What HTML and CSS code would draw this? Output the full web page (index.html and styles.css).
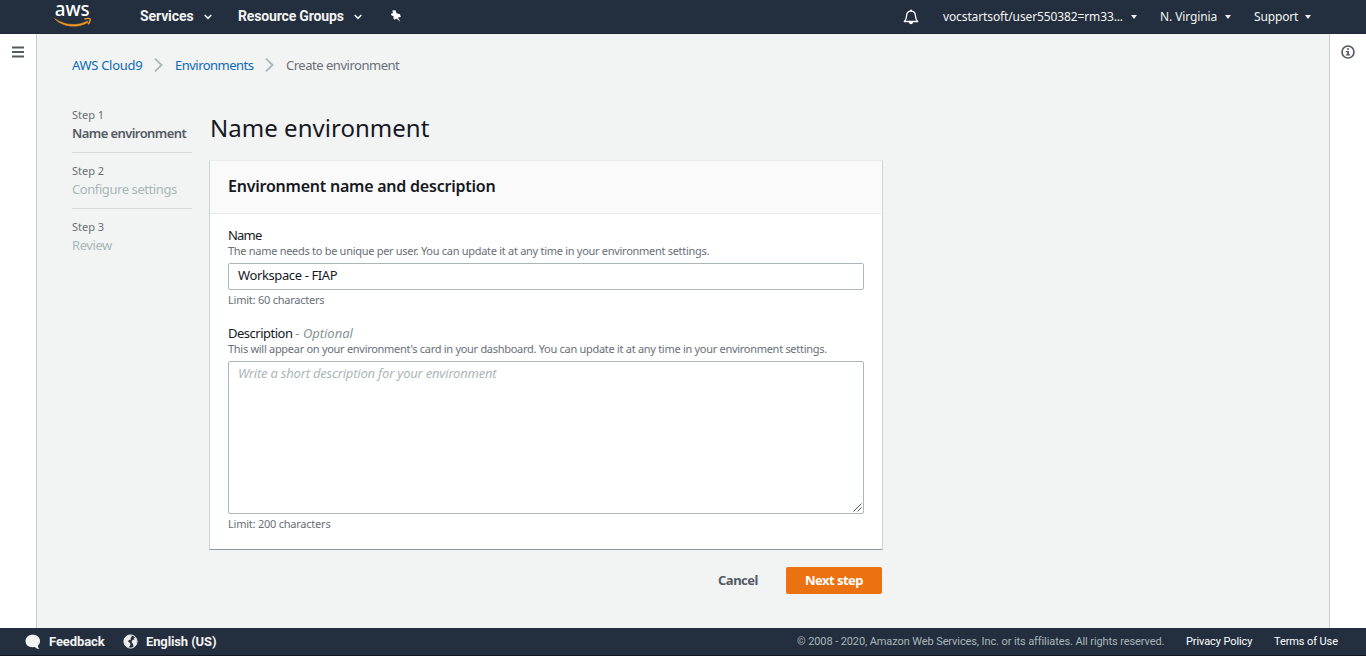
FILE: index.html
```html
<!DOCTYPE html>
<html lang="en">
<head>
<meta charset="utf-8">
<title>AWS Cloud9</title>
<link rel="stylesheet" href="styles.css">
</head>
<body>
<header class="topbar">
  <svg class="logo" width="40" height="33" viewBox="0 0 40 33">
    <text class="logo-text" x="0.7" y="16" textLength="35" lengthAdjust="spacingAndGlyphs">aws</text>
    <path d="M.4 19C10 26 24 27 33.500 21.500L34 22.800C24 29 9 28 .4 19Z" transform="translate(0 -.5)" fill="#f7981f" stroke="#f7981f" stroke-width=".5"/>
    <path d="M30.300 19.200Q35 17.700 36.100 19Q36.800 20.800 34.100 24.300" fill="none" stroke="#f7981f" stroke-width="1.400"/>
  </svg>
  <nav class="nav-left">
    <span class="nav-bold services">Services</span>
    <svg class="chev chev-one" width="8" height="6" viewBox="0 0 8 6"><path d="M.7 1L4 4.300L7.300 1" fill="none" stroke="#eee" stroke-width="1.600"/></svg>
    <span class="nav-bold groups">Resource Groups</span>
    <svg class="chev chev-two" width="8" height="6" viewBox="0 0 8 6"><path d="M.7 1L4 4.300L7.300 1" fill="none" stroke="#eee" stroke-width="1.600"/></svg>
    <svg class="pin" width="12" height="12" viewBox="0 0 12 12"><path d="M2.200.5L5.500.2L6.500 3.200L10 4.300L10.800 7L7.900 7.500L10.300 11.700L6.300 8.500L4.600 9.700L3.400 8.600L3.700 6.500L1 5L1 3.700L3 3Z" fill="#fff"/></svg>
  </nav>
  <nav class="nav-right">
    <svg class="bell" width="16" height="16" viewBox="0 0 16 16"><path d="M1.300 12.500Q3.600 10.300 3.600 6.500Q3.900 2.200 8 2.200Q12.100 2.200 12.400 6.500Q12.400 10.300 14.700 12.500Z" fill="none" stroke="#fff" stroke-width="1.300" stroke-linejoin="round"/><path d="M7 2V.7H9V2ZM5.800 13H10.200Q9.800 15.200 8 15.200Q6.200 15.200 5.800 13Z" fill="#fff"/></svg>
    <span class="nav-item account">vocstartsoft/user550382=rm33...</span><i class="caret"></i>
    <span class="nav-item region">N. Virginia</span><i class="caret"></i>
    <span class="nav-item support">Support</span><i class="caret"></i>
  </nav>
</header>
<div class="shell">
  <aside class="rail rail-left">
    <svg width="12" height="12" viewBox="0 0 12 12"><path d="M0 1.500H12M0 6H12M0 10.500H12" stroke="#545b64" stroke-width="1.800"/></svg>
  </aside>
  <main class="main">
    <nav class="crumbs">
      <span class="link crumb-a">AWS Cloud9</span>
      <svg width="9" height="14" viewBox="0 0 9 14"><path d="M1 .7L7.500 7L1 13.300" fill="none" stroke="#aab7b8" stroke-width="1.800"/></svg>
      <span class="link crumb-b">Environments</span>
      <svg width="9" height="14" viewBox="0 0 9 14"><path d="M1 .7L7.500 7L1 13.300" fill="none" stroke="#aab7b8" stroke-width="1.800"/></svg>
      <span class="crumb-c">Create environment</span>
    </nav>
    <div class="wizard">
      <ol class="steps">
        <li class="step"><span class="step-no">Step 1</span><b class="step-name current">Name environment</b></li>
        <li class="step"><span class="step-no">Step 2</span><span class="step-name">Configure settings</span></li>
        <li class="step"><span class="step-no">Step 3</span><span class="step-name">Review</span></li>
      </ol>
      <section class="form">
        <h1 class="title"><span>Name environment</span></h1>
        <div class="card">
          <h2 class="card-head"><span>Environment name and description</span></h2>
          <div class="card-body">
            <label class="label label-name">Name</label>
            <p class="hint hint-name">The name needs to be unique per user. You can update it at any time in your environment settings.</p>
            <div class="input"><span>Workspace - FIAP</span></div>
            <p class="limit limit-name">Limit: 60 characters</p>
            <label class="label label-desc">Description <span class="optional">- <em>Optional</em></span></label>
            <p class="hint hint-desc">This will appear on your environment's card in your dashboard. You can update it at any time in your environment settings.</p>
            <div class="textarea"><em>Write a short description for your environment</em>
              <svg class="grip" width="9" height="9" viewBox="0 0 9 9"><path d="M.5 8.500L8.500.5M4.500 8.500L8.500 4.500" stroke="#555" stroke-width="1"/></svg>
            </div>
            <p class="limit limit-desc">Limit: 200 characters</p>
          </div>
        </div>
        <div class="actions"><span class="cancel">Cancel</span><button class="next"><span>Next step</span></button></div>
      </section>
    </div>
  </main>
  <aside class="rail rail-right">
    <svg width="14" height="14" viewBox="0 0 14 14"><circle cx="7" cy="7" r="6" fill="none" stroke="#545b64" stroke-width="1.700"/><path d="M6.100 3.200H8V4.800H6.100ZM5 6H8V9.300H9V10.600H5V9.300H6.200V7.200H5Z" fill="#545b64"/></svg>
  </aside>
</div>
<footer class="footer">
  <svg class="bubble" width="16" height="16" viewBox="0 0 16 16"><path d="M7.700.8C12 .8 15 3.400 15 6.900C15 9 14.200 10.500 12.800 11.700Q13 14 14.500 15Q11.500 15 9.700 13Q1 14 .5 7.200C.5 3.400 3.500.8 7.700.8Z" fill="#f3f3f3"/></svg>
  <span class="foot-bold feedback">Feedback</span>
  <svg class="globe" width="15" height="15" viewBox="0 0 15 15"><circle cx="7.500" cy="7.500" r="6.600" fill="#242f3f" stroke="#eee" stroke-width="1"/><path d="M1 5L3.500 2L7.500 1L9 2L7.500 4L8 5.500L6 6L5 7.500L7 9L7.500 11L5.500 13.500L2.500 11.500L1 8ZM10.500 4L12.500 3.500L14 7L13 11L10.500 13L10 10L8.500 8L9.500 6L11.500 5.500Z" fill="#eee"/></svg>
  <span class="foot-bold language">English (US)</span>
  <span class="copyright">© 2008 - 2020, Amazon Web Services, Inc. or its affiliates. All rights reserved.</span>
  <span class="foot-link privacy">Privacy Policy</span>
  <span class="foot-link terms">Terms of Use</span>
</footer>
</body>
</html>
```

FILE: styles.css
```css
* { box-sizing: border-box; }
body { margin: 0; height: 656px; display: flex; flex-direction: column; overflow: hidden; font: 13px/18px "Noto Sans", sans-serif; color: #16191f; background: #f2f3f3; white-space: nowrap; }
h1, h2, p, ol { margin: 0; padding: 0; }
svg { display: block; flex: none; }
.topbar { height: 34px; flex: none; display: flex; align-items: center; background: #232f3e; padding-left: 54px; border-bottom: 1px solid #202940; }
.logo { overflow: visible; }
.logo-text { font: 500 20px "Noto Sans", sans-serif; fill: #fff; }
.nav-left, .nav-right { display: flex; align-items: center; }
.nav-left { margin: 0 0 1px 46px; }
.nav-bold { font: 700 14px/18px Roboto, sans-serif; color: #f3f3f3; }
.services { width: 64px; letter-spacing: -.1px; }
.groups { width: 116px; margin-left: 26px; letter-spacing: -.16px; }
.chev { margin-top: 2px; }
.pin { margin-left: 28px; }
.nav-right { margin-left: 501px; }
.nav-item { font-size: 12px; color: #f3f3f3; }
.account { width: 188px; margin-left: 24px; letter-spacing: -.12px; }
.region { width: 65px; margin-left: 23px; letter-spacing: -.1px; }
.support { width: 51px; margin-left: 23px; letter-spacing: -.15px; }
.caret { border: 3.5px solid transparent; border-top: 4px solid #eee; border-bottom: 0; }
.shell { height: 594px; display: flex; }
.rail { background: #fff; flex: none; width: 37px; }
.rail-left { border-right: 1px solid #c4cccc; padding: 12px 0 0 12px; }
.rail-right { border-left: 1px solid #c8cece; padding: 11px 0 0 11px; }
.main { flex: 1; padding: 22px 0 0 35px; }
.crumbs { display: flex; align-items: center; height: 18px; color: #687078; }
.crumbs svg { margin: 0 12px 0 11px; }
.link { color: #0f6ab8; }
.crumb-a { width: 71px; letter-spacing: -.3px; }
.crumb-b { width: 79px; letter-spacing: -.52px; }
.crumb-c { letter-spacing: -.48px; }
.wizard { display: flex; }
.steps { width: 120px; margin: 31px 17px 0 0; list-style: none; }
.step { height: 56px; margin: 0; border-bottom: 1px solid #d5dbdb; padding-top: 10px; }
.step:first-child { height: 48px; padding-top: 2px; }
.step:last-child { border: 0; }
.step span, .step b { display: block; }
.step-no { font-size: 11px; line-height: 16px; color: #687078; }
.step-name { color: #aab7b8; line-height: 20px; letter-spacing: -.42px; }
.current { color: #545b64; font-weight: 600; letter-spacing: -.58px; }
.form { width: 674px; }
.title { font-size: 24px; line-height: 36px; font-weight: 400; letter-spacing: .03px; padding: 36px 0 0 1px; }
.card { width: 674px; height: 390px; margin-top: 14px; border: 1px solid #cdd4d5; border-top-color: #eaeded; border-bottom: 1px solid #8b989f; background: #fff; }
.card-head { height: 53px; padding: 15px 18px; border-bottom: 1px solid #eaeded; background: #fafafa; font-size: 16px; line-height: 20px; font-weight: 600; letter-spacing: -.23px; }
.card-body { padding: 12px 18px; }
.label { display: block; height: 17px; line-height: 18px; letter-spacing: -.5px; }
.label-name { letter-spacing: -.8px; }
.hint, .limit { font-size: 11px; line-height: 16px; color: #687078; letter-spacing: -.29px; }
.input { width: 636px; height: 27px; margin-top: 4px; padding: 2px 9px; border: 1px solid #aab7b8; border-radius: 2px; letter-spacing: -.38px; }
.limit { padding-top: 2px; height: 18px; letter-spacing: -.23px; }
.label-desc { margin-top: 16px; }
.optional { color: #879596; letter-spacing: -.02px; }
.textarea { width: 636px; height: 153px; margin-top: 4px; padding: 2px 9px; border: 1px solid #aab7b8; border-radius: 2px; color: #aab7b8; position: relative; letter-spacing: -.2px; }
.grip { position: absolute; right: 1px; bottom: 1px; }
.actions { display: flex; align-items: center; justify-content: flex-end; margin: 17px 1px 0 0; }
.cancel { font-weight: 700; color: #545b64; width: 40px; margin-right: 28px; letter-spacing: -.5px; line-height: 16px; padding-bottom: 2px; }
.next { width: 96px; height: 27px; padding: 0; border: 0; border-radius: 2px; background: #ec7211; color: #fff; font: 700 13px/27px "Noto Sans", sans-serif; letter-spacing: -.55px; }
.footer { height: 28px; flex: none; display: flex; align-items: center; background: #232f3e; border-bottom: 1px solid #10161c; padding-left: 25px; font-family: Roboto, sans-serif; }
.foot-bold { font-size: 13px; font-weight: 700; color: #f3f3f3; }
.feedback { width: 56px; margin-left: 8px; letter-spacing: -.1px; }
.globe { margin: 0 8px 0 18px; }
.language { width: 71px; letter-spacing: -.12px; }
.copyright { width: 367px; margin-left: 580px; font-size: 11px; color: #aab7b8; letter-spacing: -.1px; }
.foot-link { font-size: 11px; color: #fff; letter-spacing: -.1px; }
.privacy { width: 67px; margin-left: 22px; }
.terms { margin-left: 21px; }
```
